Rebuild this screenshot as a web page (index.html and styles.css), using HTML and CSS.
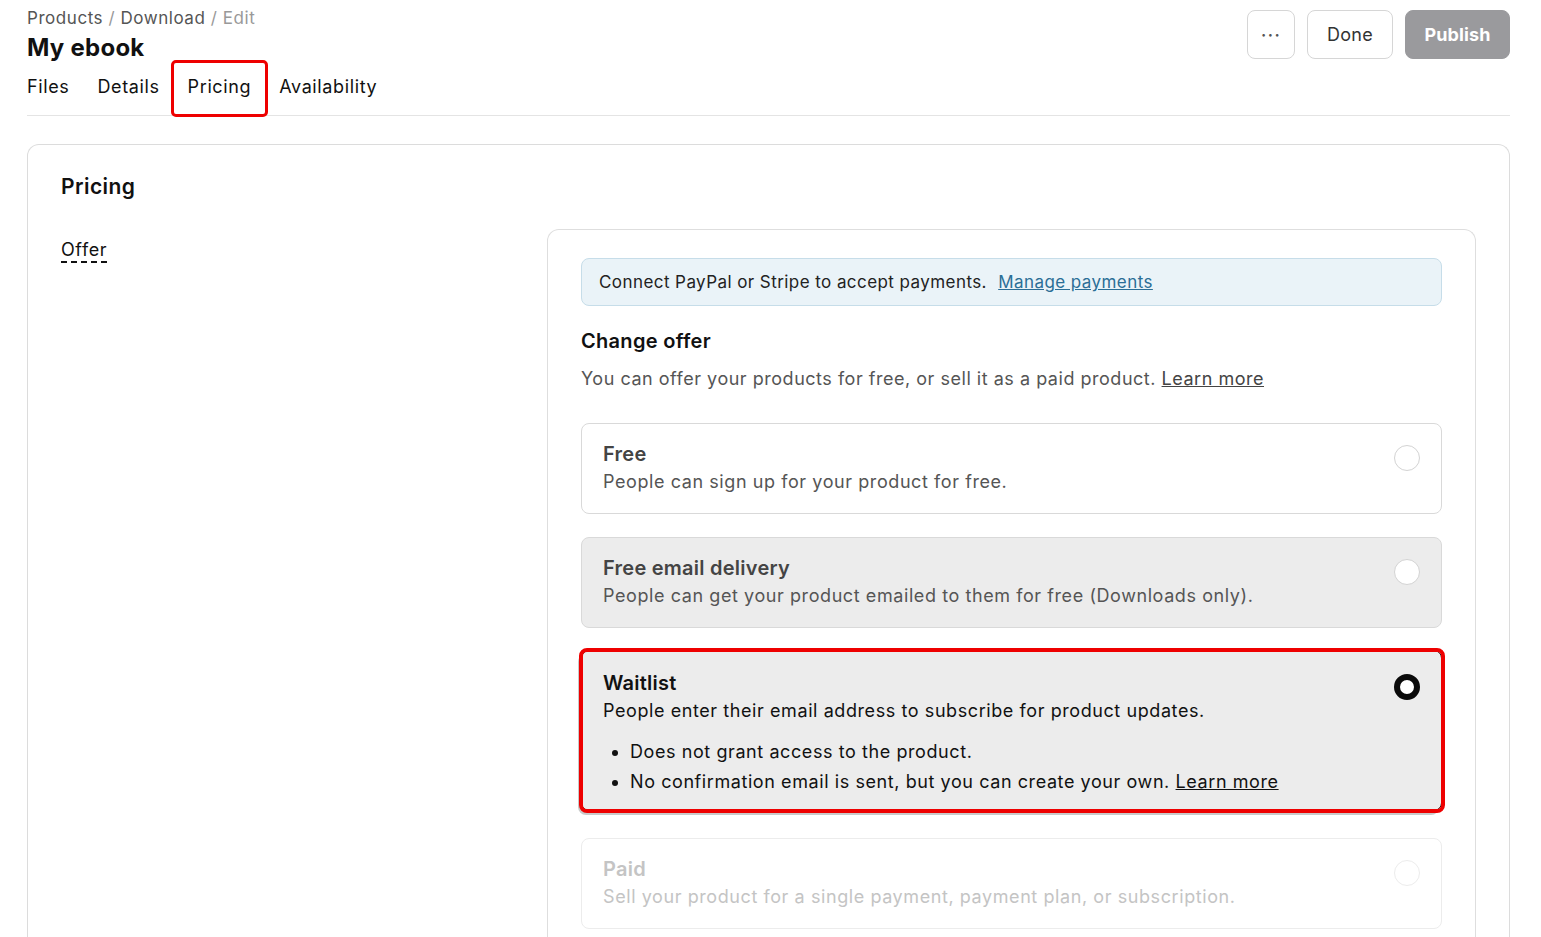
FILE: index.html
```html
<!DOCTYPE html>
<html lang="en">

<head>
    <meta charset="utf-8">
    <meta name="viewport" content="width=device-width, initial-scale=1.0">
    <title>My ebook</title>

    <link rel="stylesheet" href="styles.css">
</head>

<body>
    <header>
        <div class="top">
            <div class="head-left">
                <p class="crumbs"><span>Products</span> / <span>Download</span> / Edit</p>
                <h1>My ebook</h1>
            </div>
            <div class="actions">
                <button class="btn dots">&middot;&middot;&middot;</button>
                <button class="btn done">Done</button>
                <button class="btn publish">Publish</button>
            </div>
        </div>

        <nav class="tabs">
            <a href="#">Files</a>
            <a href="#">Details</a>
            <a href="#" class="valgt">Pricing</a>
            <a href="#">Availability</a>
        </nav>
    </header>

    <main>
        <section class="card">
            <h2>Pricing</h2>

            <div class="row">
                <div class="label"><span>Offer</span></div>

                <div class="panel">
                    <div class="notice">
                        Connect PayPal or Stripe to accept payments. <a href="#">Manage payments</a>
                    </div>

                    <h3>Change offer</h3>
                    <p class="intro">You can offer your products for free, or sell it as a paid product. <a href="#">Learn more</a></p>

                    <div class="options">
                        <label class="option">
                            <div>
                                <h4>Free</h4>
                                <p>People can sign up for your product for free.</p>
                            </div>
                            <span class="radio"></span>
                        </label>

                        <label class="option grey">
                            <div>
                                <h4>Free email delivery</h4>
                                <p>People can get your product emailed to them for free (Downloads only).</p>
                            </div>
                            <span class="radio"></span>
                        </label>

                        <label class="option grey chosen">
                            <div>
                                <h4>Waitlist</h4>
                                <p>People enter their email address to subscribe for product updates.</p>
                                <ul>
                                    <li>Does not grant access to the product.</li>
                                    <li>No confirmation email is sent, but you can create your own. <a href="#">Learn more</a></li>
                                </ul>
                            </div>
                            <span class="radio on"></span>
                        </label>

                        <label class="option off">
                            <div>
                                <h4>Paid</h4>
                                <p>Sell your product for a single payment, payment plan, or subscription.</p>
                            </div>
                            <span class="radio"></span>
                        </label>
                    </div>
                </div>
            </div>
        </section>
    </main>
</body>

</html>
```

FILE: styles.css
```css
body {
    margin: 0;
    padding: 7px 31px 0 27px;
    font-family: Inter, "Noto Sans", sans-serif;
    color: #111;
    background: white;
    overflow: hidden;
}

p,
h1,
h2,
h3,
h4,
ul {
    margin: 0;
}

.top {
    display: flex;
    justify-content: space-between;
    align-items: flex-start;
}

.crumbs {
    font-size: 17px;
    line-height: 22px;
    letter-spacing: 0.55px;
    color: #999;
}

.crumbs span {
    color: #555;
}

h1 {
    font-size: 24px;
    font-weight: 700;
    line-height: 32px;
    letter-spacing: 0.25px;
    margin-top: 3px;
}

.actions {
    display: flex;
    gap: 12px;
    margin-top: 3px;
}

.btn {
    height: 49px;
    padding: 0 19px;
    border: 1px solid #d6d6d6;
    border-radius: 8px;
    background: white;
    font-family: inherit;
    font-size: 18px;
    letter-spacing: 0.3px;
    color: #333;
}

.done {
    width: 86px;
    padding: 0;
}

.dots {
    width: 48px;
    padding: 0;
    font-size: 20px;
    letter-spacing: 1px;
    color: #555;
}

.publish {
    width: 105px;
    padding: 0;
    background: #9a9a9d;
    border-color: #9a9a9d;
    color: white;
    font-weight: 700;
    letter-spacing: 0.1px;
}

.tabs {
    display: flex;
    gap: 28px;
    padding: 10px 0 15px;
    border-bottom: 1px solid #e4e4e4;
}

.tabs a {
    position: relative;
    font-size: 18px;
    line-height: 26px;
    letter-spacing: 0.62px;
    color: #111;
    text-decoration: none;
}

.tabs .valgt::after {
    content: "";
    position: absolute;
    left: -17px;
    right: -17px;
    top: -14px;
    bottom: -17px;
    border: 3px solid #ee0000;
    border-radius: 5px;
}

.card {
    margin-top: 28px;
    border: 1px solid #dcdcdc;
    border-bottom: none;
    border-radius: 12px 12px 0 0;
    padding: 28px 33px 0;
}

h2 {
    font-size: 21px;
    font-weight: 600;
    line-height: 28px;
    letter-spacing: 0.45px;
}

.row {
    display: grid;
    grid-template-columns: 1fr 929px;
    margin-top: 28px;
}

.label span {
    display: inline-block;
    margin-top: 10px;
    font-size: 18px;
    line-height: 22px;
    letter-spacing: 0.6px;
    border-bottom: 2px dashed #111;
}

.panel {
    border: 1px solid #dedede;
    border-bottom: none;
    border-radius: 12px 12px 0 0;
    padding: 28px 33px 20px;
}

.notice {
    background: #eaf3f8;
    border: 1px solid #c6dde9;
    border-radius: 8px;
    padding: 12px 17px;
    font-size: 17px;
    line-height: 22px;
    letter-spacing: 0.43px;
    color: #222;
}

.notice a {
    margin-left: 6px;
    color: #2b6e96;
}

h3 {
    margin-top: 21px;
    font-size: 20px;
    font-weight: 600;
    line-height: 28px;
    letter-spacing: 0.3px;
}

.intro {
    margin-top: 11px;
    font-size: 18px;
    line-height: 26px;
    letter-spacing: 0.52px;
    color: #555;
}

.intro a {
    color: #444;
}

.options {
    display: flex;
    flex-direction: column;
    gap: 23px;
    margin-top: 31px;
}

.option {
    position: relative;
    display: flex;
    justify-content: space-between;
    align-items: flex-start;
    border: 1px solid #d9d9d9;
    border-radius: 8px;
    padding: 16px 21px 17px;
    background: white;
}

.option h4 {
    font-size: 20px;
    font-weight: 600;
    line-height: 28px;
    letter-spacing: 0.25px;
    color: #444;
}

.option p {
    font-size: 18px;
    line-height: 28px;
    letter-spacing: 0.58px;
    color: #555;
}

.option.grey {
    background: #ececec;
}

.option.chosen {
    margin-top: -1px;
    margin-bottom: 4px;
    border-color: #111;
    padding-top: 18px;
    padding-bottom: 13px;
    box-shadow: -3px 4px 0 #c9c9c9;
}

.option.chosen::after {
    content: "";
    position: absolute;
    left: -3px;
    right: -4px;
    top: -3px;
    bottom: -3px;
    border: 4px solid #ee0000;
    border-radius: 8px;
}

.option.chosen h4,
.option.chosen p,
.option.chosen li {
    color: #111;
}

.option ul {
    margin-top: 12px;
    padding-left: 27px;
    font-size: 18px;
    line-height: 30px;
    letter-spacing: 0.58px;
}

.option li a {
    color: #111;
}

.option.off {
    border-color: #ececec;
}

.option.off h4,
.option.off p {
    color: #c4c4c4;
}

.radio {
    flex: none;
    width: 26px;
    height: 26px;
    margin-top: 5px;
    border: 1px solid #d3d3d3;
    border-radius: 50%;
    background: white;
    box-sizing: border-box;
}

.option.off .radio {
    border-color: #ececec;
}

.radio.on {
    border: 6px solid #0a0a0a;
    margin-top: 5px;
}
```
